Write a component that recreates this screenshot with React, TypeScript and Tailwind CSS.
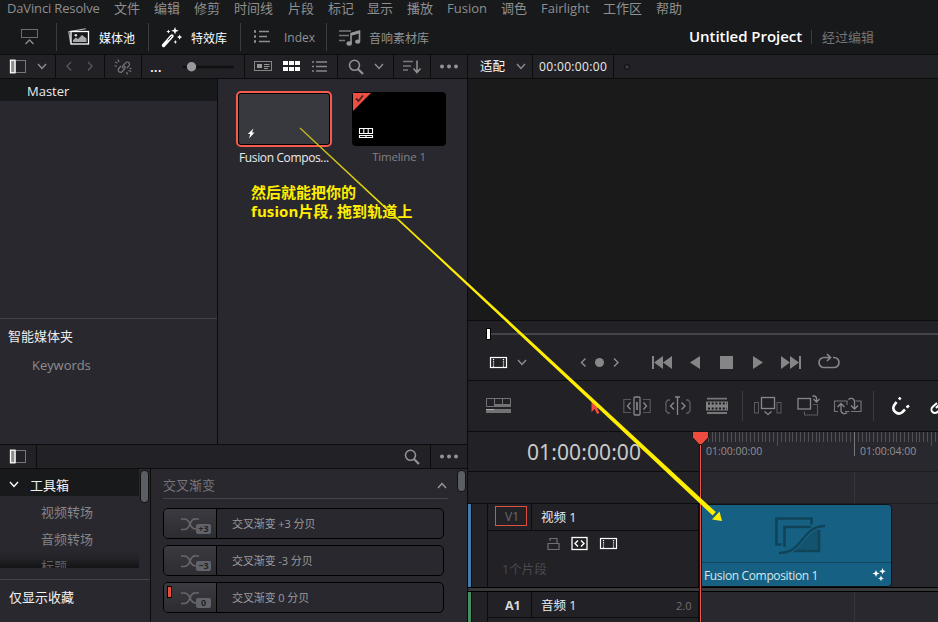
import React from 'react';

type Kids = { children?: React.ReactNode; className?: string };

function Icon({ w, h, className = '', children }: { w: number; h: number; className?: string; children: React.ReactNode }) {
  return (
    <svg width={w} height={h} viewBox={`0 0 ${w} ${h}`} fill="none" className={`shrink-0 ${className}`}>
      {children}
    </svg>
  );
}

function Cell({ children, className = '' }: Kids) {
  return <div className={`flex h-full shrink-0 items-center border-r border-[#0c0c0d] ${className}`}>{children}</div>;
}

function Divider({ className = '' }: Kids) {
  return <div className={`w-px shrink-0 bg-[#3c3d40] ${className}`} />;
}

const Chevron = ({ className = '' }: Kids) => (
  <Icon w={10} h={7} className={className}>
    <path d="M1 1l4 4.5L9 1" stroke="currentColor" strokeWidth="1.4" />
  </Icon>
);

const SidebarIcon = () => (
  <Icon w={17} h={15} className="ml-[9px]">
    <rect x="6.5" y="1.5" width="10" height="12" stroke="#77777a" />
    <rect x="1.5" y="1.2" width="4.5" height="12.6" fill="#8c8c8f" stroke="#fff" strokeWidth="1.3" />
  </Icon>
);

const SearchIcon = ({ className = '' }: Kids) => (
  <Icon w={16} h={16} className={className}>
    <circle cx="6.5" cy="6.3" r="5" stroke="#929295" strokeWidth="1.6" />
    <path d="M10 10l5 5" stroke="#929295" strokeWidth="2.2" />
  </Icon>
);

const DotsIcon = ({ className = '' }: Kids) => (
  <Icon w={20} h={6} className={className}>
    <circle cx="3" cy="2.5" r="2" fill="#949497" />
    <circle cx="10" cy="2.5" r="2" fill="#949497" />
    <circle cx="17" cy="2.5" r="2" fill="#949497" />
  </Icon>
);

const FilmIcon = ({ className = '' }: Kids) => (
  <Icon w={19} h={13} className={className}>
    <rect x="1.5" y="1.5" width="16" height="10" stroke="#fff" strokeWidth="1.2" />
    <path d="M4.5 3v8M14.5 3v8" stroke="#fff" strokeWidth="1.2" strokeDasharray="1.2 1" />
  </Icon>
);

const menu: [string, string][] = [
  ['DaVinci Resolve', 'w-[107px] tracking-[-0.15px]'],
  ['文件', 'w-[40px]'],
  ['编辑', 'w-[40px]'],
  ['修剪', 'w-[40px]'],
  ['时间线', 'w-[54px]'],
  ['片段', 'w-[40px]'],
  ['标记', 'w-[39px]'],
  ['显示', 'w-[40px]'],
  ['播放', 'w-[40px]'],
  ['Fusion', 'w-[54px]'],
  ['调色', 'w-[40px]'],
  ['Fairlight', 'w-[62px]'],
  ['工作区', 'w-[53px]'],
  ['帮助', 'w-[40px]'],
];

function MenuBar() {
  return (
    <nav className="flex h-[18px] pl-[7px] text-[13px] leading-[17px] text-[#8f8f90]">
      {menu.map(([t, w]) => (
        <div key={t} className={`shrink-0 ${w}`}>{t}</div>
      ))}
    </nav>
  );
}

function PageBar() {
  return (
    <div className="flex h-[36px] items-center text-[12px]">
      <Icon w={19} h={18} className="ml-[20px] mt-[2px]">
        <rect x="1.5" y="1.5" width="16" height="8" stroke="#6c6d70" />
        <path d="M5.5 16l4-4 4 4" stroke="#8f8f92" strokeWidth="1.3" />
      </Icon>
      <Divider className="ml-[17px] mt-[2px] h-[28px]" />
      <Icon w={24} h={22} className="ml-[10px] mt-[2px]">
        <path d="M3.5 16.5L1.8 5.6l17-2.8" stroke="#bbb" strokeWidth="1.1" />
        <rect x="4" y="5.5" width="17.5" height="12.5" stroke="#fff" strokeWidth="1.3" />
        <circle cx="8.8" cy="9.2" r="1.3" fill="#ddd" />
        <path d="M6 16v-2l3-2.5 2 1.5 4-4 4.5 3.5V16z" fill="#a8a8aa" />
      </Icon>
      <div className="ml-[8px] w-[49px] shrink-0 pt-[5px] text-white">媒体池</div>
      <Divider className="mt-[2px] h-[28px]" />
      <Icon w={22} h={22} className="ml-[12px] mt-[2px]">
        <path d="M2.5 19.5l8.5-9.5" stroke="#fff" strokeWidth="3.4" strokeLinecap="round" />
        <path d="M7 14.3l3.6-4" stroke="#222" strokeWidth="1" />
        <path d="M14 1l1 2.8 2.8 1-2.8 1-1 2.8-1-2.8-2.8-1 2.8-1zM7.4 3.6l.6 1.4 1.4.6-1.4.6-.6 1.4-.6-1.4-1.4-.6 1.4-.6zM18.6 8.5l.8 1.8 1.8.8-1.8.8-.8 1.8-.8-1.8-1.8-.8 1.8-.8zM14.4 14l.6 1.4 1.4.6-1.4.6-.6 1.4-.6-1.4-1.4-.6 1.4-.6z" fill="#fff" />
      </Icon>
      <div className="ml-[8px] w-[49px] shrink-0 pt-[5px] text-white">特效库</div>
      <Divider className="mt-[2px] h-[28px]" />
      <Icon w={18} h={16} className="ml-[12px] mt-[2px]">
        <path d="M6 2.5h10M6 7.5h8M6 12.5h11" stroke="#8f8f92" strokeWidth="1.5" />
        <path d="M1 2.5h2M1 7.5h2M1 12.5h2" stroke="#8f8f92" strokeWidth="2.4" />
      </Icon>
      <div className="ml-[13px] w-[42px] shrink-0 pt-[4px] text-[12px] text-[#929294]">Index</div>
      <Divider className="mt-[2px] h-[28px]" />
      <Icon w={22} h={18} className="ml-[12px] mt-[4px]">
        <path d="M0 2h12M0 6.5h10M0 11.5h6" stroke="#77787a" strokeWidth="1.5" />
        <path d="M12 14V4.5l8.500-2.500v10.500" stroke="#98989a" strokeWidth="1.6" />
        <path d="M12 5.5l8.500-2.500" stroke="#98989a" strokeWidth="2.4" />
        <ellipse cx="10.2" cy="14.5" rx="2.7" ry="2.2" fill="#98989a" />
        <ellipse cx="18.7" cy="12.7" rx="2.6" ry="2.1" fill="#98989a" />
      </Icon>
      <div className="ml-[8px] w-[320px] shrink-0 pt-[5px] text-[#929294]">音响素材库</div>
      <div className="w-[122px] shrink-0 text-[15px] font-semibold tracking-[-0.05px] text-white">Untitled Project</div>
      <Divider className="mt-px h-[14px]" />
      <div className="ml-[10px] pt-[3px] text-[13px] text-[#737375]">经过编辑</div>
    </div>
  );
}

function BinToolbar() {
  return (
    <div className="flex h-[25px] w-[468px] shrink-0 items-center border-y border-[#0c0c0d] bg-[#222126]">
      <Cell className="w-[56px]"><SidebarIcon /><Chevron className="ml-[11px] text-[#8e8e91]" /></Cell>
      <Cell className="w-[49px]">
        <Icon w={30} h={12} className="ml-[8px]">
          <path d="M7 1L3 5 7 9.5M24 1l4 4-4 4.5" stroke="#58585b" strokeWidth="1.3" />
        </Icon>
      </Cell>
      <Cell className="w-[37px]">
        <Icon w={18} h={16} className="ml-[9px]">
          <path d="M7 7L4.8 9.5a2.3 2.3 0 003.5 3l2.2-2.5a2.3 2.3 0 00-.3-3.2M9.5 9.5a2.3 2.3 0 01-.3-3.2l2.3-2.5a2.3 2.3 0 013.5 3L12.8 9.2M1 3l2.5 1M4 .5l1 2.5M.5 7H3M14.5 11.5l2.8 1M12.5 13l1 2.5M15.5 9.5h2" stroke="#77777a" strokeWidth="1.2" />
        </Icon>
      </Cell>
      <Cell className="w-[103px]">
        <div className="ml-[8px] w-[30px] text-[14px] font-semibold leading-[14px] text-white">...</div>
        <Icon w={56} h={12} className="ml-[3px]">
          <path d="M0 6h51" stroke="#101011" strokeWidth="2.5" />
          <circle cx="8.5" cy="5.7" r="4.7" fill="#9a9a9d" />
        </Icon>
      </Cell>
      <Cell className="w-[93px]">
        <Icon w={18} h={12} className="ml-[9px]">
          <rect x=".5" y=".5" width="17" height="9" stroke="#858588" />
          <rect x="3" y="3" width="5" height="4" fill="#97979a" />
          <path d="M10 3.5h5.5M10 5.5h5.5M10 7.5h4" stroke="#97979a" />
        </Icon>
        <Icon w={17} h={11} className="ml-[11px]">
          <path d="M0 0h5v4H0zM6 0h5v4H6zM12 0h5v4h-5zM0 6h5v4H0zM6 6h5v4H6zM12 6h5v4h-5z" fill="#fff" />
        </Icon>
        <Icon w={15} h={12} className="ml-[12px]">
          <path d="M4 1h11M4 5.500h11M4 10h11" stroke="#88888b" strokeWidth="1.4" />
          <path d="M0 1h2M0 5.500h2M0 10h2" stroke="#88888b" strokeWidth="1.4" />
        </Icon>
      </Cell>
      <Cell className="w-[56px]"><SearchIcon className="ml-[10px]" /><Chevron className="ml-[10px] text-[#8e8e91]" /></Cell>
      <Cell className="w-[37px]">
        <Icon w={19} h={14} className="ml-[9px]">
          <path d="M0 1.5h10M0 6h8M0 10h5" stroke="#77777a" strokeWidth="1.6" />
          <path d="M14 .5v11M10.5 8.5l3.5 4 3.5-4" stroke="#929295" strokeWidth="1.5" />
        </Icon>
      </Cell>
      <Cell className="w-[37px]"><DotsIcon className="ml-[8px]" /></Cell>
    </div>
  );
}

function MediaPool() {
  return (
    <div className="flex h-[365px] bg-[#29282e]">
      <aside className="w-[218px] shrink-0 border-r border-[#0c0c0d]">
        <div className="h-[22px] bg-[#18191b] pl-[27px] text-[13px] leading-[24px] text-[#ececed]">Master</div>
        <div className="h-[217px]" />
        <div className="h-px bg-[#444449]" />
        <div className="mt-[8px] h-[20px] pl-[8px] text-[13px] leading-[19px] text-[#ececed]">智能媒体夹</div>
        <div className="mt-[8px] h-[20px] pl-[32px] text-[13px] leading-[21px] tracking-[-0.05px] text-[#8d8d90]">Keywords</div>
      </aside>
      <main className="w-[249px]">
        <div className="flex pl-[18px] pt-[12px]">
          <div className="w-[96px]">
            <div className="flex h-[56px] items-end rounded-[5px] border-2 border-[#f75b4e] bg-black p-px">
              <div className="flex h-full w-full items-end rounded-[2px] bg-[#38393e]">
                <Icon w={10} h={12} className="mb-[5px] ml-[8px]">
                  <path d="M6.500 1.500L.8 7h2.500L2 11.500 7.500 5.500H5z" fill="#fff" />
                </Icon>
              </div>
            </div>
            <div className="mt-[1px] whitespace-nowrap pl-[3px] text-[12px] leading-[19px] tracking-[-0.37px] text-[#ececed]">Fusion Compos...</div>
          </div>
          <div className="ml-[20px] w-[94px]">
            <div className="mt-[1px] h-[54px] overflow-hidden rounded-[4px] bg-black">
              <Icon w={94} h={54}>
                <path d="M1 1h18L1 19z" fill="#ee4f43" />
                <path d="M4 6.5l2.5 2.5L11 3.5" stroke="#54211e" strokeWidth="1.8" />
                <path d="M7.5 36.5h13v5h-13zM11.8 36.5v5M16.2 36.5v5M7.5 43.5h13v2h-13zM14 43.5V46" stroke="#fff" strokeWidth="1.1" />
              </Icon>
            </div>
            <div className="mt-[2px] text-center text-[11.5px] leading-[17px] tracking-[-0.15px] text-[#828286]">Timeline 1</div>
          </div>
        </div>
        <div className="ml-[33px] mt-[16px] whitespace-nowrap text-[15px] font-bold leading-[19px] text-[#ffee00]">
          <div>然后就能把你的</div>
          <div className="tracking-[0.1px]">fusion片段, 拖到轨道上</div>
        </div>
      </main>
    </div>
  );
}

function FxCard({ name, badge, fav }: { name: string; badge: string; fav?: boolean }) {
  return (
    <div className="mb-[6px] flex h-[31px] w-[281px] overflow-hidden rounded-[5px] border border-black bg-[#29282e]">
      <div className="flex w-[53px] border-r border-black bg-gradient-to-b from-[#3a3a40] to-[#2c2c31]">
        <div className="w-[16px] pl-[3px] pt-[3px]">{fav && <div className="h-[12px] w-[5px] border border-black bg-[#ec4b3d]" />}</div>
        <Icon w={34} h={29}>
          <path d="M1 10h3q4 0 6 5t6 5h3M1 20.500h3q4 0 6-5.500t6-5h3" stroke="#66666b" strokeWidth="1.7" />
          <rect x="16" y="15" width="15" height="10" rx="2" fill="#62636a" />
          <text x="23.5" y="23.3" textAnchor="middle" fontSize="9" fontWeight="700" fill="#232327">{badge}</text>
        </Icon>
      </div>
      <div className="pl-[15px] text-[11px] leading-[29px] tracking-[-0.1px] text-[#9b9b9e]">{name}</div>
    </div>
  );
}

function Effects() {
  return (
    <section className="flex h-[178px] flex-col">
      <div className="flex h-[25px] shrink-0 items-center border-y border-[#0c0c0d] bg-[#222126]">
        <Cell className="w-[37px]"><SidebarIcon /></Cell>
        <Cell className="w-[394px] justify-end pr-[10px]"><SearchIcon /></Cell>
        <Cell className="w-[37px]"><DotsIcon className="ml-[8px]" /></Cell>
      </div>
      <div className="flex h-[153px] bg-[#29282e]">
        <aside className="w-[151px] shrink-0 border-r border-[#0c0c0d] text-[13px] text-[#858588]">
          <div className="flex h-[99px]">
            <div className="h-[99px] w-[139px] overflow-hidden">
              <div className="flex h-[27px] bg-[#18191b] text-[#f2f2f2]">
                <Chevron className="ml-[9px] mt-[12px] text-white" />
                <div className="ml-[11px] leading-[33px]">工具箱</div>
              </div>
              <div className="h-[27px] pl-[41px] leading-[33px]">视频转场</div>
              <div className="h-[27px] pl-[41px] leading-[33px]">音频转场</div>
              <div className="-mt-px h-[19px] overflow-hidden bg-gradient-to-b from-transparent via-[#232327] to-[#141416] pl-[41px] leading-[34px] text-[#606063]">标题</div>
            </div>
            <div className="ml-[1px] mt-px h-[33px] w-[9px] rounded-[4px] border border-[#111] bg-[#5b5e65]" />
          </div>
          <div className="mt-[11px] h-px bg-[#444449]" />
          <div className="mt-[8px] pl-[9px] leading-[19px] text-[#f2f2f2]">仅显示收藏</div>
        </aside>
        <main className="h-[153px] w-[305px] overflow-hidden pl-[12px]">
          <div className="mb-[9px] flex h-[30px] w-[285px] items-center justify-between border-b border-[#444449] pt-[4px] text-[13px] text-[#77777b]">
            <span>交叉渐变</span>
            <Chevron className="mr-[1px] rotate-180 text-[#9a9a9d]" />
          </div>
          <FxCard name="交叉渐变 +3 分贝" badge="+3" />
          <FxCard name="交叉渐变 -3 分贝" badge="−3" />
          <FxCard name="交叉渐变 0 分贝" badge="0" fav />
        </main>
        <div className="ml-[1px] mt-px h-[22px] w-[9px] rounded-[4px] border border-[#111] bg-[#5b5e65]" />
      </div>
    </section>
  );
}

function Transport() {
  return (
    <div className="h-[59px] bg-[#222126]">
      <div className="flex h-[26px] items-center pl-[18px]">
        <div className="h-[12px] w-[5px] border border-black bg-white" />
        <div className="h-[2px] flex-1 bg-[#42464b]" />
      </div>
      <div className="mt-[5px] flex h-[20px] items-center pl-[21px]">
        <FilmIcon />
        <Chevron className="ml-[9px] text-[#8e8e91]" />
        <Icon w={42} h={12} className="ml-[52px]">
          <path d="M6.5 2.5L2.5 6.5l4 4M35 2.5l4 4-4 4" stroke="#8f8f92" strokeWidth="1.4" />
          <circle cx="20.5" cy="6.5" r="4.5" fill="#88888b" />
        </Icon>
        <Icon w={192} h={18} className="ml-[30px] text-[#858588]">
          <path d="M1 3h2v13H1zM12 3v13L3 9.500zM21 3v13l-9-6.500zM49 3v13l-10-6.500zM69 3h13v13H69zM102 3l10 6.500-10 6.500zM130 3l9 6.500-9 6.500zM139 3l9 6.500-9 6.500zM148 3h2v13h-2z" fill="currentColor" />
          <path d="M174 4.500h-1a5 5 0 000 10h10a5 5 0 000-10h-1M173 4.500h6M176 1l3.500 3.500L176 8" stroke="currentColor" strokeWidth="1.7" />
        </Icon>
      </div>
    </div>
  );
}

function EditTools() {
  return (
    <div className="flex h-[51px] items-center border-t border-[#0c0c0d] bg-[#222126] pl-[17px]">
      <Icon w={27} h={17} className="-mt-px">
        <path d="M1.5 1.5h24v8h-24zM9.5 1.5v8M17.5 1.5v8" stroke="#737376" />
        <path d="M9 7h17v2.500H9zM1 12h25v4H1z" fill="#737376" />
        <path d="M1 12.5h8" stroke="#aaa" />
      </Icon>
      <Icon w={14} h={19} className="ml-[77px]">
        <path d="M2.5 2v13l3.2-3 2.3 5 2.5-1-2.4-5H12z" fill="#ef4a3d" />
      </Icon>
      <Icon w={28} h={21} className="ml-[20px]">
        <path d="M8 3.5H.8v13H8M20 3.5h7.2v13H20" stroke="#58585b" strokeWidth="1.2" />
        <rect x="11" y="1" width="6" height="18" rx="1" stroke="#88888b" strokeWidth="1.3" />
        <path d="M14 6v8" stroke="#77777a" strokeWidth="2" />
        <path d="M7.5 6.5L4.5 10l3 3.5M20.5 6.5l3 3.5-3 3.5" stroke="#88888b" strokeWidth="1.3" />
      </Icon>
      <Icon w={26} h={21} className="ml-[14px]">
        <path d="M5 4H3L1 6v9l2 2h2M21 4h2l2 2v9l-2 2h-2" stroke="#5f5f62" strokeWidth="1.3" />
        <path d="M12.5 1v18M10 1h5" stroke="#88888b" strokeWidth="1.3" />
        <path d="M9 6.5L5.5 10 9 13.5M16.5 6.5L20 10l-3.5 3.5" stroke="#88888b" strokeWidth="1.4" />
      </Icon>
      <Icon w={24} h={20} className="ml-[14px]">
        <path d="M2 2.700h20M2 17h20" stroke="#77777a" strokeWidth="1.8" />
        <rect x="1" y="5.500" width="22" height="9" rx=".5" fill="#808083" />
        <path d="M3 7.500h19M3 12.500h19" stroke="#18181b" strokeWidth="1.8" strokeDasharray="2 1.700" />
      </Icon>
      <Divider className="ml-[13px] h-[30px]" />
      <Icon w={28} h={20} className="ml-[11px]">
        <rect x=".5" y="6.5" width="4" height="10.5" stroke="#5b5b5e" />
        <rect x="7.5" y="1.5" width="13" height="11" stroke="#88888b" strokeWidth="1.3" />
        <rect x="23" y="6.5" width="4" height="10.5" stroke="#5b5b5e" />
        <path d="M10.5 15.5l3.5 3 3.5-3" stroke="#88888b" strokeWidth="1.3" />
      </Icon>
      <Icon w={24} h={22} className="ml-[15px]">
        <path d="M7.5 16.500v3.500h13V9.500H16" stroke="#5b5b5e" strokeWidth="1.1" />
        <rect x="1" y="3.5" width="12.5" height="10.5" stroke="#88888b" strokeWidth="1.3" />
        <path d="M15.5 1H17a2.500 2.500 0 012.500 2.500V6M16.500 4l3 3 3-3" stroke="#88888b" strokeWidth="1.3" />
      </Icon>
      <Icon w={30} h={22} className="ml-[12px]">
        <path d="M5 16.500H1.500V6H14v4M12 16.500h4.500M22.500 6h5.500v10.500H18" stroke="#77777a" strokeWidth="1.1" />
        <path d="M14 17.500a3.500 3.500 0 01-6-1.500V9M4.500 12L8 8.500l3.500 3.500M15.500 4.500a3.500 3.500 0 016 1.500v7.500M18 10.500l3.500 3.500 3.500-3.500" stroke="#88888b" strokeWidth="1.3" />
      </Icon>
      <Divider className="ml-[10px] h-[30px]" />
      <Icon w={20} h={20} className="ml-[17px]">
        <path d="M5.500 6L3 9.500a5.500 5.500 0 008 7l3-3" stroke="#fff" strokeWidth="2.6" />
        <path d="M8 3.500l1.500-2M15.500 11.500l2.500-2" stroke="#fff" strokeWidth="2.6" />
      </Icon>
      <Icon w={18} h={20} className="ml-[19px]">
        <path d="M7 7L2.500 11a3.500 3.500 0 005 5l4-4M6 12l7-7" stroke="#fff" strokeWidth="2" />
      </Icon>
    </div>
  );
}

const minorTicks = Array.from({ length: 62 }, (_, i) => i + 1);

function Ruler() {
  return (
    <div className="h-[39px] bg-[#29282e]">
      <Icon w={239} h={24}>
        {minorTicks.map((i) => (
          <path
            key={i}
            d={`M${Math.round(i * 3.85 + 1) + 0.5} 0v${i % 40 === 0 ? 24 : i % 20 === 0 ? 14 : 10}`}
            stroke={i % 40 === 0 ? '#77777a' : '#505054'}
          />
        ))}
      </Icon>
      <div className="-mt-[13px] flex text-[10.5px] leading-[16px] text-[#919194]">
        <span className="ml-[7px] w-[154px]">01:00:00:00</span>
        <span>01:00:04:00</span>
      </div>
    </div>
  );
}

function Clip() {
  return (
    <div className="h-[83px] w-[191px] rounded-r-[4px] border border-[#101112] bg-[#166183]">
      <Icon w={189} h={57}>
        <path d="M79.500 39.500h-5v-26h35v6" stroke="#114359" strokeWidth="2.600" />
        <path d="M90 45.500q7-4 12-13 6-9 15-10v23z" fill="#14536e" />
        <path d="M82.500 42V22h27M117 25v21H91" stroke="#114359" strokeWidth="2.600" />
        <path d="M77 48c25 0 22-27 46-27" stroke="#166183" strokeWidth="5" />
        <path d="M77 48c25 0 22-27 46-27" stroke="#114359" strokeWidth="2.400" />
      </Icon>
      <div className="flex h-[24px] items-center border-t border-[#12465e] pl-[2px] text-[12px] tracking-[-0.35px] text-[#d8e7ec]">
        <span className="w-[168px] whitespace-nowrap pt-[3px]">Fusion Composition 1</span>
        <Icon w={14} h={14}>
          <path d="M4 2l1 2.500L7.500 5.500 5 6.500 4 9 3 6.500.5 5.500 3 4.500zM10.500 0l.9 2.300 2.300 1-2.300 1-.9 2.300-.9-2.300-2.300-1 2.300-1zM9 7.500l.8 2 2 .9-2 .9-.8 2-.8-2-2-.9 2-.9z" fill="#fff" />
        </Icon>
      </div>
    </div>
  );
}

function Timeline() {
  return (
    <div className="flex h-[192px] border-t border-[#0c0c0d]">
      <div className="w-[231px] shrink-0 bg-[#222126]">
        <div className="h-[39px] pl-[59px] font-['Noto_Sans'] text-[21px] leading-[41px] tracking-[0.1px] text-[#cacaca]">01:00:00:00</div>
        <div className="h-[33px] border-y border-[#0c0c0d]" />
        <div className="flex h-[83px]">
          <div className="w-[4px] border-r border-[#0c0c0d] bg-[#437bab]" />
          <div className="w-[16px] border-r border-[#0c0c0d]" />
          <div className="w-[211px] border-r border-[#0c0c0d]">
            <div className="flex h-[27px] items-center border-b border-[#0c0c0d]">
              <Cell className="w-[44px]">
                <div className="ml-[7px] mt-[-2px] h-[20px] w-[32px] border border-[#df5044] pl-[2px] text-center text-[12px] leading-[19px] text-[#6b6b6e]">V1</div>
              </Cell>
              <span className="ml-[9px] pt-[2px] text-[12.5px] text-[#ededee]">视频 1</span>
            </div>
            <div className="-mt-px flex h-[27px] items-center pl-[59px]">
              <Icon w={13} h={14}>
                <path d="M1 6.500h11v6H1zM3 4V1.500h7v5" stroke="#707073" strokeWidth="1.2" />
              </Icon>
              <Icon w={19} h={15} className="ml-[10px]">
                <rect x="2" y="1.500" width="15" height="12" stroke="#fff" strokeWidth="1.3" />
                <path d="M8 4.500L5 7.500l3 3M11 4.500l3 3-3 3" stroke="#fff" strokeWidth="1.4" />
              </Icon>
              <FilmIcon className="ml-[10px]" />
            </div>
            <div className="pl-[14px] pt-[2px] text-[12.5px] leading-[22px] text-[#49494d]">1个片段</div>
          </div>
        </div>
        <div className="h-[5px] border-y border-black bg-[#38383b]" />
        <div className="flex h-[31px]">
          <div className="w-[4px] border-r border-[#0c0c0d] bg-[#458f60]" />
          <div className="w-[16px] border-r border-[#0c0c0d]" />
          <div className="w-[211px] border-r border-[#0c0c0d]">
            <div className="flex h-[26px] items-center border-b border-[#0c0c0d]">
              <Cell className="w-[44px] pl-[17px] pt-[4px] text-[12.5px] font-bold text-[#d7d7d8]">A1</Cell>
              <span className="ml-[9px] w-[135px] pt-[3px] text-[12.5px] text-[#ededee]">音频 1</span>
              <span className="pt-[4px] text-[11px] text-[#707073]">2.0</span>
            </div>
          </div>
        </div>
      </div>
      <div className="relative w-[239px] overflow-hidden bg-[#29282e]">
        <Ruler />
        <div className="flex h-[33px] border-y border-[#1e1e21]"><div className="ml-[155px] w-px bg-[#36363a]" /></div>
        <div className="h-[83px] pl-[2px]"><Clip /></div>
        <div className="h-[5px] border-y border-black bg-[#38383b]" />
        <div className="flex h-[31px]"><div className="ml-[155px] w-px bg-[#36363a]" /></div>
        <div className="absolute left-0 top-0 h-full w-[3px] border-x border-[#151516] bg-[#ef5548]" />
      </div>
    </div>
  );
}

export default function App() {
  return (
    <div className="relative h-[622px] w-[938px] overflow-hidden bg-[#18191b] font-['Open_Sans','Noto_Sans_CJK_SC',sans-serif]">
      <MenuBar />
      <PageBar />
      <div className="flex">
        <div className="w-[468px] shrink-0 border-r border-[#0c0c0d]">
          <BinToolbar />
          <MediaPool />
          <Effects />
        </div>
        <div className="w-[470px]">
          <div className="flex h-[25px] items-center border-y border-[#0c0c0d] bg-[#222126] text-[12px] text-white">
            <Cell className="w-[65px]"><span className="ml-[12px] w-[36px] pt-[2px] text-[12.5px]">适配</span><Chevron className="text-[#8e8e91]" /></Cell>
            <Cell className="w-[81px] pl-[6px] text-[12px] tracking-[0.35px] text-[#ececed]">00:00:00:00</Cell>
            <div className="ml-[10px] h-[6px] w-[6px] shrink-0 rounded-full border border-[#0b0b0b] bg-[#3a3a3e]" />
          </div>
          <div className="h-[242px] border-b border-[#0c0c0d] bg-[#1a1a1a]" />
          <Transport />
          <EditTools />
          <Timeline />
        </div>
      </div>
      <svg className="pointer-events-none absolute left-0 top-0" width="938" height="622" viewBox="0 0 938 622">
        <defs>
          <linearGradient id="arrow" gradientUnits="userSpaceOnUse" x1="300" y1="128" x2="440" y2="258">
            <stop offset="0" stopColor="#c3b71a" />
            <stop offset="1" stopColor="#ffee00" />
          </linearGradient>
        </defs>
        <path d="M692.5 431.5h16v6l-6.5 7h-3l-6.5-7z" fill="#ef4b3e" stroke="#171718" />
        <path d="M300.400 127.600L420.600 239.200 715.800 512 712.600 515.400 419.300 240.500 299.600 128.500z" fill="url(#arrow)" />
        <path d="M722 521L719.500 511.500 712 519.500z" fill="#ffee00" />
      </svg>
    </div>
  );
}
